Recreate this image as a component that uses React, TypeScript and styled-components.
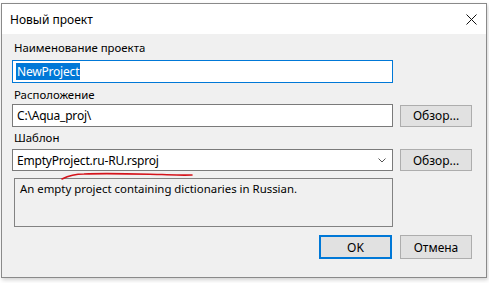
import React from "react";
import styled, { createGlobalStyle } from "styled-components";

const Global = createGlobalStyle`
  html, body { margin: 0; padding: 0; background: #ffffff; }
  body { font-family: "Noto Sans", "Open Sans", sans-serif; font-size: 12px; color: #000; }
  #root { width: 489px; height: 283px; overflow: hidden; }
`;

const Window = styled.div`
  position: relative;
  margin: 3px 0 0 1px;
  width: 486px;
  height: 275px;
  box-sizing: border-box;
  border: 1px solid #8a8a8a;
  background: #f0f0f0;
  box-shadow: 1px 2px 4px rgba(0, 0, 0, 0.18);
  display: flex;
  flex-direction: column;
`;

const TitleBar = styled.div`
  height: 30px;
  background: #ffffff;
  display: flex;
  align-items: center;
  justify-content: space-between;
  padding: 0 9px 0 8px;
  font-size: 12px;
`;

const CloseIcon = styled.svg`
  width: 11px;
  height: 11px;
  margin-top: 1px;
`;

const Body = styled.div`
  flex: 1;
  padding: 6px 0 0 10px;
  display: flex;
  flex-direction: column;
  font-size: 11.4px;
`;

const Label = styled.div<{ $gapAfter: number }>`
  line-height: 16px;
  height: 16px;
  padding-left: 2px;
  margin-bottom: ${(p) => p.$gapAfter}px;
`;

const Row = styled.div<{ $gapAfter: number }>`
  display: flex;
  align-items: center;
  gap: 7px;
  margin-bottom: ${(p) => p.$gapAfter}px;
`;

const TextBox = styled.div<{ $focused?: boolean; $h?: number }>`
  position: relative;
  width: 381px;
  height: ${(p) => p.$h ?? 23}px;
  box-sizing: border-box;
  border: 1px solid ${(p) => (p.$focused ? "#0078d7" : "#7a7a7a")};
  background: #ffffff;
  display: flex;
  align-items: center;
  padding-left: 3px;
  font-size: 12px;
  letter-spacing: -0.2px;
`;

const Selected = styled.span`
  background: #0078d7;
  color: #ffffff;
  line-height: 17px;
  padding: 0 1px 0 1px;
`;

const Plain = styled.span`
  padding-left: 1px;
`;

const Chevron = styled.svg`
  position: absolute;
  right: 6px;
  top: 8px;
  width: 8px;
  height: 5px;
`;

const Button = styled.div<{ $default?: boolean; $w?: number; $h?: number }>`
  width: ${(p) => p.$w ?? 72}px;
  height: ${(p) => p.$h ?? 22}px;
  box-sizing: border-box;
  background: #e1e1e1;
  border: 1px solid ${(p) => (p.$default ? "#0078d7" : "#adadad")};
  box-shadow: ${(p) => (p.$default ? "inset 0 0 0 1px #0078d7" : "none")};
  display: flex;
  align-items: center;
  justify-content: center;
  font-size: 12px;
`;

const Description = styled.div`
  margin-left: 2px;
  width: 379px;
  height: 49px;
  box-sizing: border-box;
  border: 1px solid #828282;
  background: #f0f0f0;
  padding: 2px 0 0 5px;
  line-height: 16px;
  margin-bottom: 8px;
`;

const Footer = styled.div`
  display: flex;
  gap: 8px;
  padding-left: 307px;
`;

const Scribble = styled.svg`
  position: absolute;
  left: 56px;
  top: 165px;
  width: 140px;
  height: 14px;
  pointer-events: none;
`;

export default function App() {
  return (
    <>
      <Global />
      <Window>
        <TitleBar>
          <span>Новый проект</span>
          <CloseIcon viewBox="0 0 11 11">
            <path d="M0.5 0.5 L10.5 10.5 M10.5 0.5 L0.5 10.5" stroke="#111" strokeWidth="1" fill="none" />
          </CloseIcon>
        </TitleBar>
        <Body>
          <Label $gapAfter={4}>Наименование проекта</Label>
          <Row $gapAfter={4}>
            <TextBox $focused>
              <Selected>NewProject</Selected>
            </TextBox>
          </Row>
          <Label $gapAfter={1}>Расположение</Label>
          <Row $gapAfter={3}>
            <TextBox>
              <Plain>C:\Aqua_proj\</Plain>
            </TextBox>
            <Button>Обзор...</Button>
          </Row>
          <Label $gapAfter={3}>Шаблон</Label>
          <Row $gapAfter={7}>
            <TextBox $h={22}>
              <Plain>EmptyProject.ru-RU.rsproj</Plain>
              <Chevron viewBox="0 0 8 5">
                <path d="M0.5 0.5 L4 4 L7.5 0.5" stroke="#555" strokeWidth="1" fill="none" />
              </Chevron>
            </TextBox>
            <Button>Обзор...</Button>
          </Row>
          <Description>An empty project containing dictionaries in Russian.</Description>
          <Footer>
            <Button $default $w={73} $h={24}>OK</Button>
            <Button $h={24}>Отмена</Button>
          </Footer>
        </Body>
        <Scribble viewBox="0 0 140 14">
          <path
            d="M4 10 C 10 7, 16 5, 26 5 C 50 4, 80 5, 104 5.5 C 116 6, 124 6.5, 134 6"
            stroke="#d4141c"
            strokeWidth="1.6"
            fill="none"
            strokeLinecap="round"
          />
        </Scribble>
      </Window>
    </>
  );
}
